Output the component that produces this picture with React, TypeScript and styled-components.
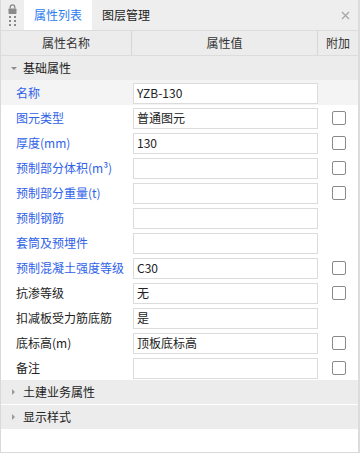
import styled, { createGlobalStyle } from "styled-components";

const GlobalStyle = createGlobalStyle`
  html, body {
    margin: 0;
    padding: 0;
    background: #ffffff;
  }
  body {
    font-family: "Noto Sans CJK SC", "Noto Sans", sans-serif;
    font-size: 12px;
    color: #333333;
  }
`;

const Panel = styled.div`
  width: 360px;
  height: 453px;
  box-sizing: border-box;
  border-left: 1px solid #d9d9d9;
  border-right: 2px solid #dcdcdc;
  border-bottom: 1px solid #d9d9d9;
  background: #ffffff;
  display: flex;
  flex-direction: column;
  overflow: hidden;
`;

const TabBar = styled.div`
  height: 30px;
  background: #eeeeee;
  display: flex;
  align-items: stretch;
`;

const Handle = styled.div`
  width: 23px;
  display: flex;
  flex-direction: column;
  align-items: center;
  padding-top: 4px;
`;

const Dots = styled.div`
  display: grid;
  grid-template-columns: 3px 3px;
  gap: 2px 2px;
  margin-top: 2px;

  span {
    width: 2px;
    height: 2px;
    background: #8a8a8a;
  }
`;

const Tab = styled.div<{ $active?: boolean }>`
  width: 68px;
  display: flex;
  align-items: center;
  padding-left: 10px;
  box-sizing: border-box;
  background: ${({ $active }) => ($active ? "#ffffff" : "transparent")};
  color: ${({ $active }) => ($active ? "#2b7cf0" : "#222222")};
  font-size: 12px;
  line-height: 14px;
`;

const Spacer = styled.div`
  flex: 1;
`;

const Close = styled.div`
  width: 26px;
  display: flex;
  align-items: center;
  justify-content: center;
  padding-top: 1px;
`;

const HeaderRow = styled.div`
  height: 24px;
  background: #ececec;
  border-top: 1px solid #dcdcdc;
  border-bottom: 1px solid #dcdcdc;
  display: grid;
  grid-template-columns: 131px 186px 1fr;
`;

const HeaderCell = styled.div<{ $last?: boolean }>`
  display: flex;
  align-items: center;
  justify-content: center;
  border-right: ${({ $last }) => ($last ? "none" : "1px solid #d6d6d6")};
  font-size: 12px;
  line-height: 14px;
  color: #333333;
`;

const SectionRow = styled.div<{ $gap?: boolean }>`
  height: 24px;
  background: #ececec;
  display: flex;
  align-items: center;
  padding-left: 9px;
  margin-bottom: ${({ $gap }) => ($gap ? "1px" : "0")};
  font-size: 12px;
  line-height: 14px;
  color: #222222;
  gap: 6px;
`;

const Arrow = styled.span<{ $open?: boolean }>`
  width: 0;
  height: 0;
  ${({ $open }) =>
    $open
      ? `border-left: 3px solid transparent;
         border-right: 3px solid transparent;
         border-top: 3px solid #8c8c8c;
         margin: 0 0 0 1px;`
      : `border-top: 3px solid transparent;
         border-bottom: 3px solid transparent;
         border-left: 3px solid #9a9a9a;
         margin: 0 2px 0 2px;`}
`;

const Row = styled.div<{ $selected?: boolean }>`
  height: 25px;
  display: grid;
  grid-template-columns: 132px 185px 1fr;
  align-items: center;
  background: ${({ $selected }) => ($selected ? "#f4f4f4" : "#ffffff")};
`;

const Label = styled.div<{ $blue?: boolean }>`
  padding-left: 15px;
  color: ${({ $blue }) => ($blue ? "#2f62e8" : "#222222")};
  font-size: 12px;
  line-height: 14px;
  white-space: nowrap;
`;

const ValueBox = styled.div`
  height: 21px;
  box-sizing: border-box;
  border: 1px solid #dcdcdc;
  background: #ffffff;
  display: flex;
  align-items: center;
  padding-left: 3px;
  font-size: 12px;
  line-height: 14px;
  color: #222222;
  margin-top: 1px;
`;

const CheckCell = styled.div`
  display: flex;
  align-items: center;
  justify-content: center;
  padding-left: 1px;
`;

const Checkbox = styled.span`
  width: 14px;
  height: 14px;
  box-sizing: border-box;
  border: 1px solid #8a8a8a;
  border-radius: 2px;
  background: #ffffff;
`;

type Prop = {
  name: string;
  value: string;
  blue: boolean;
  check: boolean;
};

const props: Prop[] = [
  { name: "名称", value: "YZB-130", blue: true, check: false },
  { name: "图元类型", value: "普通图元", blue: true, check: true },
  { name: "厚度(mm)", value: "130", blue: true, check: true },
  { name: "预制部分体积(m³)", value: "", blue: true, check: true },
  { name: "预制部分重量(t)", value: "", blue: true, check: true },
  { name: "预制钢筋", value: "", blue: true, check: false },
  { name: "套筒及预埋件", value: "", blue: true, check: false },
  { name: "预制混凝土强度等级", value: "C30", blue: true, check: true },
  { name: "抗渗等级", value: "无", blue: false, check: true },
  { name: "扣减板受力筋底筋", value: "是", blue: false, check: false },
  { name: "底标高(m)", value: "顶板底标高", blue: false, check: true },
  { name: "备注", value: "", blue: false, check: true },
];

function LockIcon() {
  return (
    <svg width="9" height="10" viewBox="0 0 9 10">
      <path
        d="M2.2 4.5V3.2a2.3 2.3 0 0 1 4.6 0v1.3"
        fill="none"
        stroke="#8a8a8a"
        strokeWidth="1.3"
      />
      <rect x="0.5" y="4.5" width="8" height="5.5" rx="0.8" fill="#8a8a8a" />
    </svg>
  );
}

function CloseIcon() {
  return (
    <svg width="9" height="9" viewBox="0 0 9 9">
      <path d="M1 1L8 8M8 1L1 8" stroke="#a5a5a5" strokeWidth="1.2" />
    </svg>
  );
}

export default function App() {
  const rows = props.map((p, i) => (
    <Row key={p.name} $selected={i === 0}>
      <Label $blue={p.blue}>{p.name}</Label>
      <ValueBox>{p.value}</ValueBox>
      <CheckCell>{p.check && <Checkbox />}</CheckCell>
    </Row>
  ));

  return (
    <>
      <GlobalStyle />
      <Panel>
        <TabBar>
          <Handle>
            <LockIcon />
            <Dots>
              <span />
              <span />
              <span />
              <span />
              <span />
              <span />
            </Dots>
          </Handle>
          <Tab $active>属性列表</Tab>
          <Tab>图层管理</Tab>
          <Spacer />
          <Close>
            <CloseIcon />
          </Close>
        </TabBar>
        <HeaderRow>
          <HeaderCell>属性名称</HeaderCell>
          <HeaderCell>属性值</HeaderCell>
          <HeaderCell $last>附加</HeaderCell>
        </HeaderRow>
        <SectionRow>
          <Arrow $open />
          基础属性
        </SectionRow>
        {rows}
        <SectionRow $gap>
          <Arrow />
          土建业务属性
        </SectionRow>
        <SectionRow>
          <Arrow />
          显示样式
        </SectionRow>
      </Panel>
    </>
  );
}
